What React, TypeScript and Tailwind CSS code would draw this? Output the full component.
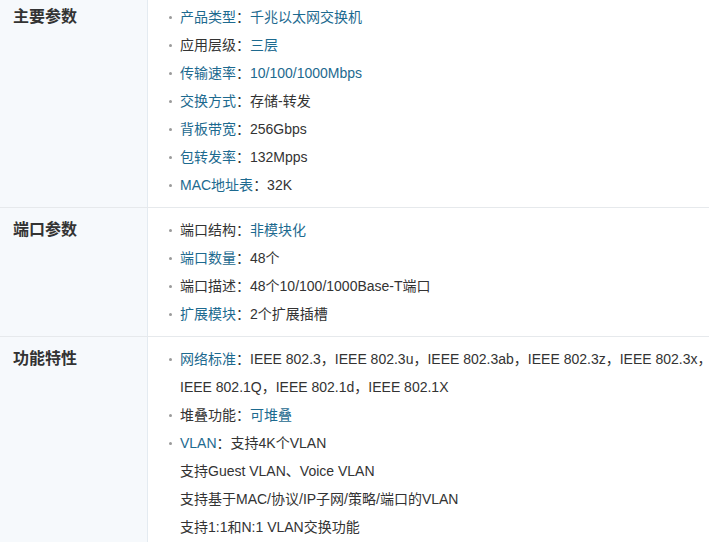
import React from "react";

type Seg = { t: string; link?: boolean };
type Item = { segs: Seg[]; bullet: boolean };

const L = (t: string): Seg => ({ t, link: true });
const T = (t: string): Seg => ({ t });

const sections: { title: string; items: Item[]; first?: boolean }[] = [
  {
    title: "主要参数",
    first: true,
    items: [
      { bullet: true, segs: [L("产品类型"), T("："), L("千兆以太网交换机")] },
      { bullet: true, segs: [T("应用层级："), L("三层")] },
      { bullet: true, segs: [L("传输速率"), T("："), L("10/100/1000Mbps")] },
      { bullet: true, segs: [L("交换方式"), T("：存储-转发")] },
      { bullet: true, segs: [L("背板带宽"), T("：256Gbps")] },
      { bullet: true, segs: [L("包转发率"), T("：132Mpps")] },
      { bullet: true, segs: [L("MAC地址表"), T("：32K")] },
    ],
  },
  {
    title: "端口参数",
    items: [
      { bullet: true, segs: [T("端口结构："), L("非模块化")] },
      { bullet: true, segs: [L("端口数量"), T("：48个")] },
      { bullet: true, segs: [T("端口描述：48个10/100/1000Base-T端口")] },
      { bullet: true, segs: [L("扩展模块"), T("：2个扩展插槽")] },
    ],
  },
  {
    title: "功能特性",
    items: [
      {
        bullet: true,
        segs: [
          L("网络标准"),
          T("：IEEE 802.3，IEEE 802.3u，IEEE 802.3ab，IEEE 802.3z，IEEE 802.3x，"),
        ],
      },
      { bullet: false, segs: [T("IEEE 802.1Q，IEEE 802.1d，IEEE 802.1X")] },
      { bullet: true, segs: [T("堆叠功能："), L("可堆叠")] },
      { bullet: true, segs: [L("VLAN"), T("：支持4K个VLAN")] },
      { bullet: false, segs: [T("支持Guest VLAN、Voice VLAN")] },
      { bullet: false, segs: [T("支持基于MAC/协议/IP子网/策略/端口的VLAN")] },
      { bullet: false, segs: [T("支持1:1和N:1 VLAN交换功能")] },
    ],
  },
];

export default function App() {
  return (
    <div
      className="w-[709px] h-[542px] overflow-hidden bg-white text-[14px] text-[#333]"
      style={{ fontFamily: '"Liberation Sans", Arial, "Noto Sans CJK SC", sans-serif' }}
    >
      {sections.map((s, i) => (
        <div
          key={i}
          className={`flex ${i > 0 ? "border-t border-[#e6e9ec]" : ""}`}
        >
          <div
            className={`w-[148px] shrink-0 bg-[#f6f9fc] border-r border-[#e4ebf1] pl-[13px] ${
              s.first ? "pt-[3px]" : "pt-[8px]"
            } pb-[8px]`}
          >
            <div className="h-[28px] leading-[28px] text-[16px] font-bold text-[#333]">
              {s.title}
            </div>
          </div>
          <div
            className={`flex-1 pl-[20px] ${s.first ? "pt-[3px]" : "pt-[8px]"} pb-[8px]`}
          >
            {s.items.map((it, j) => (
              <div key={j} className="relative h-[28px] leading-[28px] pl-[12px] whitespace-nowrap">
                {it.bullet && (
                  <span className="absolute left-[1px] top-[13px] w-[3px] h-[3px] rounded-full bg-[#9a9a9a]" />
                )}
                {it.segs.map((sg, k) =>
                  sg.link ? (
                    <span key={k} className="text-[#1d6a8f]">
                      {sg.t}
                    </span>
                  ) : (
                    <span key={k}>{sg.t}</span>
                  )
                )}
              </div>
            ))}
          </div>
        </div>
      ))}
    </div>
  );
}
